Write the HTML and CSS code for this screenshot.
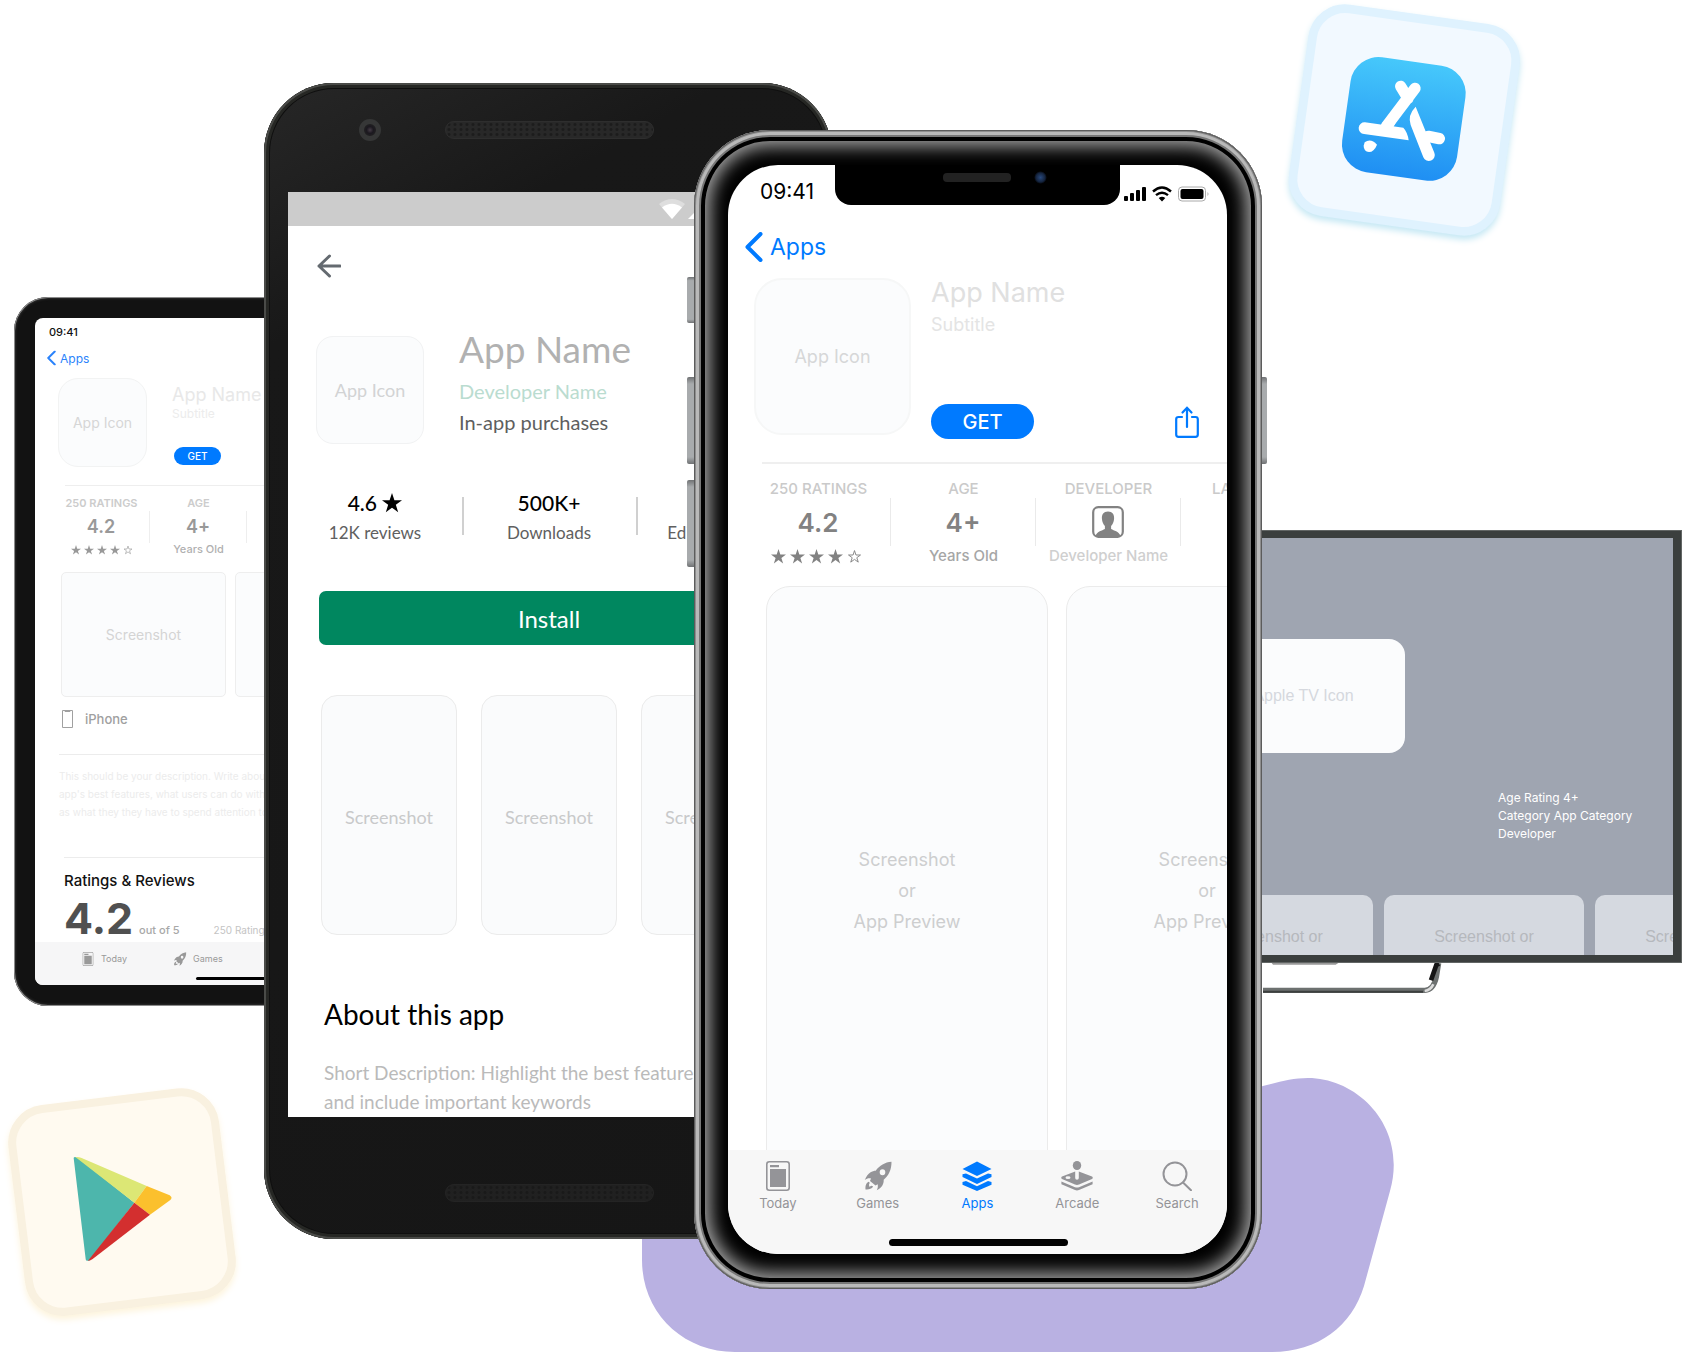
FILE: index.html
```html
<!DOCTYPE html>
<html lang="en">
<head>
<meta charset="utf-8">
<meta name="viewport" content="width=device-width, initial-scale=1">
<title>App store page previews</title>
<link rel="stylesheet" href="styles.css">
</head>
<body>
<svg class="sprite" width="0" height="0" aria-hidden="true">
  <symbol id="star" viewBox="0 0 24 24"><path d="M12 0l2.900 8.800H24l-7.400 5.400 2.800 8.800-7.400-5.400L4.600 23l2.800-8.800L0 8.800h9.100z"/></symbol>
  <symbol id="star-line" viewBox="0 0 24 24"><path fill="none" stroke="currentColor" stroke-width="1.500" d="M12 2.500l2.300 7.100h7.300l-5.900 4.300 2.300 7.100-6-4.400-6 4.400 2.300-7.100-5.900-4.300h7.300z"/></symbol>
  <symbol id="chevron" viewBox="0 0 18 30"><path fill="none" stroke="currentColor" stroke-width="4" stroke-linecap="round" stroke-linejoin="round" d="M15.500 2L2.500 15l13 13"/></symbol>
  <symbol id="today" viewBox="0 0 24 30"><rect x=".8" y=".8" width="22.400" height="28.400" rx="2.500" fill="none" stroke="currentColor" stroke-width="1.600"/><path d="M4 4h9v2.200H4zM4 8h16v18H4z"/></symbol>
  <symbol id="rocket" viewBox="0 0 28 30"><path fill-rule="evenodd" d="M27.500.8C21 1.300 15.500 4.500 11.700 9.800 8.500 9.800 4 11.500.8 19c2-1.600 4-2 6.200-1.500L6 20l5.500 4.500 2.200-1.200c.3 2 .3 3.700-.9 6 5-2.300 7.200-6.300 6.900-10.500C24.800 14.500 27.600 8.500 27.500.8zM18.500 8.200a2.800 3 0 1 1 0 6 2.800 3 0 0 1 0-6z"/><path d="M4.500 20.700C1.500 22.500 1.300 25.500 1.500 28.500c3 .3 6-.3 7.700-2.900l-1.600-.9-2.300 1-.3-2.200.8-1.800z"/></symbol>
  <symbol id="layers" viewBox="0 0 30 30"><path d="M15 .5L29.500 8 15 15 .5 8zM.5 13.300l3.500-.9 11 5.200 11-5.200 3.500.9V16L15 23 .5 16zM.5 21l3.500-.9 11 5.200 11-5.200 3.500.9v2.700L15 30 .5 23.700z"/></symbol>
  <symbol id="arcade" viewBox="0 0 32 30"><ellipse cx="16" cy="4.500" rx="4.200" ry="4.500"/><path fill-rule="evenodd" d="M14.200 10.500L1 15.500c-1 .6-1 2 0 2.500l13 5.500c1.300.5 2.700.5 4 0L31 18c1-.5 1-1.900 0-2.500l-13.200-5V17a1.800 1.800 0 0 1-3.600 0zM7 15.300a2.500 1.400 0 1 1 0 2.800 2.500 1.400 0 0 1 0-2.800z"/><path d="M.4 20.500L14 26.200c1.300.5 2.700.5 4 0l13.600-5.700v2.800L18 29c-1.300.5-2.700.5-4 0L.4 23.300z"/></symbol>
  <symbol id="search" viewBox="0 0 30 30"><g fill="none" stroke="currentColor" stroke-width="2" stroke-linecap="round"><circle cx="13" cy="13" r="11.500"/><path d="M21 21.500l8 7.800"/></g></symbol>
</svg>

<main class="scene">
  <svg class="blob" viewBox="642 1078 754 274" aria-hidden="true"><path d="M642 1180V1260C642 1313 683 1352 735 1352H1272C1318 1352 1352 1326 1364 1286L1390 1191C1408 1127 1358 1078 1308 1078C1290 1078 1276 1083 1255 1088Z" fill="#b9b1e2"/></svg>

  <section class="ipad" aria-label="Tablet store page">
    <div class="ipad-screen">
      <div class="ipad-time">09:41</div>
      <a class="ipad-back" href="#"><svg viewBox="0 0 18 30"><use href="#chevron"/></svg>Apps</a>
      <div class="ipad-head">
        <div class="ipad-icon">App Icon</div>
        <div class="ipad-info">
          <h2>App Name</h2>
          <p>Subtitle</p>
          <button type="button">GET</button>
        </div>
      </div>
      <div class="ipad-stats">
        <div class="stat"><span class="label">250 RATINGS</span><b>4.2</b><span class="stars"><svg><use href="#star"/></svg><svg><use href="#star"/></svg><svg><use href="#star"/></svg><svg><use href="#star"/></svg><svg><use href="#star-line"/></svg></span></div>
        <div class="stat"><span class="label">AGE</span><b>4+</b><span class="sub">Years Old</span></div>
      </div>
      <div class="ipad-shots"><div>Screenshot</div><div>Screenshot</div></div>
      <div class="ipad-device"><svg viewBox="0 0 11 18"><path d="M.5 .5h10v17H.5zM3 .5v1h5v-1" fill="none" stroke="currentColor"/></svg>iPhone</div>
      <p class="ipad-text">This should be your description. Write about your<br>app's best features, what users can do with it, as well<br>as what they they have to spend attention to</p>
      <h3>Ratings &amp; Reviews</h3>
      <div class="ipad-score"><b>4.2</b><span>out of 5</span><small>250 Ratings</small></div>
      <nav class="ipad-tabs">
        <a href="#"><svg viewBox="0 0 24 30"><use href="#today"/></svg>Today</a>
        <a href="#"><svg viewBox="0 0 28 30"><use href="#rocket"/></svg>Games</a>
        <a href="#" class="on"><svg viewBox="0 0 30 30"><use href="#layers"/></svg>Apps</a>
      </nav>
    </div>
  </section>

  <section class="tv" aria-label="TV store page">
    <svg class="stand" viewBox="0 0 540 96" aria-hidden="true"><path d="M26 0h200l-8 5H30z" fill="#999"/><path d="M0 82H486Q512 80 520 42L527 0" fill="none" stroke="#6d7170" stroke-width="16"/><path d="M0 86H480" stroke="#3c3f3e" stroke-width="6"/><path d="M504 52l16-46 8-4" fill="none" stroke="#151515" stroke-width="14"/><path d="M485 84q18-2 26-20" fill="none" stroke="#ddd" stroke-width="8"/></svg>
    <div class="tv-screen">
      <div class="tv-icon">Apple TV Icon</div>
      <ul class="tv-facts"><li>Age Rating 4+</li><li>Category App Category</li><li>Developer</li></ul>
      <div class="tv-shots"><div>Screenshot or</div><div>Screenshot or</div><div>Screenshot or</div><div>Screenshot or</div></div>
    </div>
  </section>

  <section class="android" aria-label="Android store page">
    <i class="camera"></i><i class="grille"></i>
    <div class="android-screen">
      <div class="android-status"><svg viewBox="0 0 60 20"><path d="M0 5Q13-5 26 5L13 20z" fill="#dedede"/><path d="M3 8.500Q13 1 23 8.500L13 20z" fill="#fff"/><path d="M29 20L49 0v20z" fill="#fff"/></svg></div>
      <a class="android-back" href="#" aria-label="Back"><svg viewBox="0 0 24 24"><path d="M12.500 2L2 12l10.500 10M2 12h21" fill="none" stroke="currentColor" stroke-width="3" stroke-linecap="round" stroke-linejoin="round"/></svg></a>
      <div class="android-head">
        <div class="android-icon">App Icon</div>
        <div><h2>App Name</h2><p class="dev">Developer Name</p><p>In-app purchases</p></div>
      </div>
      <div class="android-stats">
        <div><b>4.6 <svg viewBox="0 0 24 24"><use href="#star"/></svg></b><span>12K reviews</span></div>
        <div><b>500K+</b><span>Downloads</span></div>
        <div><b>&nbsp;</b><span>Editors’ Choice</span></div>
      </div>
      <button class="install" type="button">Install</button>
      <div class="android-shots"><div>Screenshot</div><div>Screenshot</div><div>Screenshot</div></div>
      <h3>About this app</h3>
      <p class="android-text">Short Description: Highlight the best features<br>and include important keywords</p>
    </div>
    <i class="grille low"></i>
  </section>

  <section class="iphone" aria-label="Phone store page">
    <i class="key k1"></i><i class="key k2"></i><i class="key k3"></i><i class="key k4"></i>
    <div class="iphone-screen">
      <div class="notch"><i></i><b></b></div>
      <div class="iphone-status"><time>09:41</time>
        <svg viewBox="0 0 86 16"><g><rect x="0" y="10" width="4" height="5" rx="1"/><rect x="6" y="7" width="4" height="8" rx="1"/><rect x="12" y="4" width="4" height="11" rx="1"/><rect x="18" y="1" width="4" height="14" rx="1"/></g><g fill="none" stroke="#000" stroke-width="2.400"><path d="M29 5.500q9-8 18 0M32 9.200q6-5 12 0"/></g><path d="M38 15.500l-3.300-3.600q3.300-2.400 6.600 0z"/><rect x="54.500" y="1" width="27" height="14" rx="3.500" fill="none" stroke="#aaa"/><rect x="56.500" y="3" width="23" height="10" rx="2"/><path d="M83.500 6v4q2-2 0-4z" fill="#aaa"/></svg>
      </div>
      <a class="iphone-back" href="#"><svg viewBox="0 0 18 30"><use href="#chevron"/></svg>Apps</a>
      <div class="iphone-head">
        <div class="iphone-icon">App Icon</div>
        <div class="iphone-info">
          <h1>App Name</h1>
          <p>Subtitle</p>
          <div class="actions">
            <button type="button" class="get">GET</button>
            <button type="button" class="share" aria-label="Share"><svg viewBox="0 0 24 32"><path d="M7 11H3.500Q1.200 11 1.200 13.300V28.500Q1.200 30.800 3.500 30.800H20.500Q22.800 30.800 22.800 28.500V13.300Q22.800 11 20.500 11H17M12 21V2M7.500 6.500L12 1.800l4.500 4.700" fill="none" stroke="currentColor" stroke-width="2.200" stroke-linecap="round"/></svg></button>
          </div>
        </div>
      </div>
      <hr>
      <div class="iphone-stats">
        <div class="stat"><span class="label">250 RATINGS</span><b>4.2</b><span class="stars"><svg><use href="#star"/></svg><svg><use href="#star"/></svg><svg><use href="#star"/></svg><svg><use href="#star"/></svg><svg><use href="#star-line"/></svg></span></div>
        <div class="stat"><span class="label">AGE</span><b>4+</b><span class="sub">Years Old</span></div>
        <div class="stat"><span class="label">DEVELOPER</span><b><svg viewBox="0 0 32 32"><rect x="1.200" y="1.200" width="29.600" height="29.600" rx="5" fill="none" stroke="currentColor" stroke-width="2.200"/><path d="M16 5.500c4.500 0 6.300 3 6.100 7-.2 4-1.600 5.800-3 7.500v3c3 1.600 7.500 2.500 9.400 6.500L26 31H6l-2.500-1.500c1.900-4 6.400-4.900 9.400-6.500v-3c-1.400-1.700-2.800-3.500-3-7.500-.2-4 1.600-7 6.100-7z"/></svg></b><span class="sub pale">Developer Name</span></div>
        <div class="stat"><span class="label">LANGUAGE</span></div>
      </div>
      <div class="iphone-shots"><div>Screenshot<br>or<br>App Preview</div><div>Screenshot<br>or<br>App Preview</div></div>
      <nav class="iphone-tabs">
        <a href="#"><svg viewBox="0 0 24 30"><use href="#today"/></svg>Today</a>
        <a href="#"><svg viewBox="0 0 28 30"><use href="#rocket"/></svg>Games</a>
        <a href="#" class="on"><svg viewBox="0 0 30 30"><use href="#layers"/></svg>Apps</a>
        <a href="#"><svg viewBox="0 0 32 30"><use href="#arcade"/></svg>Arcade</a>
        <a href="#"><svg viewBox="0 0 30 30"><use href="#search"/></svg>Search</a>
      </nav>
    </div>
  </section>

  <svg class="tile appstore" viewBox="0 0 900 780" role="img" aria-label="App Store">
    <defs><linearGradient id="sky" x1="0" y1="0" x2="0" y2="1"><stop offset="0" stop-color="#46c8fb"/><stop offset="1" stop-color="#1f8ff3"/></linearGradient></defs>
    <g transform="rotate(8 463 360)">
      <rect x="156" y="53" width="614" height="614" rx="98" fill="#f2f9ff" stroke="#dff2fe" stroke-width="26"/>
      <rect x="287" y="183" width="348" height="348" rx="84" fill="url(#sky)"/>
    </g>
    <g fill="none" stroke="#fff" stroke-width="34" stroke-linecap="round"><path d="M452 259l22 36M495 265l-86 114M535 409l33 7"/></g>
    <g fill="#fff"><path d="M345 367L460 383Q473 397 476 421L342 402A17 17 0 0 1 345 367Z"/><path d="M397 368l50-20-20 40z"/><path d="M497 320L553 458A17 17 0 0 1 520 472L482 375Q472 345 497 320Z"/><path d="M344 427Q362 413 381 434Q372 456 357 456Q341 454 341 437Z"/></g>
  </svg>

  <svg class="tile play" viewBox="0 0 900 846" role="img" aria-label="Google Play">
    <rect x="60" y="90" width="612" height="612" rx="102" fill="#fffaf0" stroke="#f9f1e0" stroke-width="24" transform="rotate(-7 366 396)"/>
    <path d="M221 264Q221 261 226 261L236 265L403 398L268 572H260Q257 571 257 567Z" fill="#4db6ac"/>
    <path d="M226 261Q236 260 245 264L440 348L403 398Z" fill="#dce775"/>
    <path d="M440 348L509 376Q519 383 511 390L450 434L403 398Z" fill="#fbc02d"/>
    <path d="M403 398L450 434L278 567Q270 573 264 572Z" fill="#d32f2f"/>
  </svg>
</main>
</body>
</html>
```
FILE: styles.css
```css
* { box-sizing: border-box; }
body, h1, h2, h3, p, ul { margin: 0; padding: 0; font-weight: 400; }
body { background: #fff; font-family: Inter, sans-serif; }
a { color: inherit; text-decoration: none; }
button { border: 0; padding: 0; font-family: inherit; }
svg { fill: currentColor; flex: none; }
ul { list-style: none; }
.sprite { position: absolute; }

/* Collage canvas: devices are placed around the window's centre line */
.scene { position: relative; overflow: hidden; padding: 130px 0 63px; }
.blob { position: absolute; left: calc(50% - 199px); top: 1078px; width: 754px; height: 274px; }
.tile { position: absolute; width: 300px; }
.appstore { left: calc(50% + 409px); top: 0; filter: drop-shadow(0 4px 3px #c6e8f4); }
.play { left: calc(50% - 841px); top: 1070px; filter: drop-shadow(0 4px 3px #fdf4dd); }

/* Tablet */
.ipad { position: absolute; left: calc(50% - 827px); top: 297px; width: 474px; height: 709px; padding: 21px; border-radius: 34px; background: #121212; box-shadow: inset 0 0 0 1px #8b8b8b, inset 0 0 3px 1px #444; }
.ipad-screen { display: flex; flex-direction: column; height: 100%; overflow: hidden; border-radius: 8px; background: #fff; white-space: nowrap; }
.ipad-time { padding: 4px 14px 0; font-size: 11px; line-height: 20px; font-weight: 500; color: #111; }
.ipad-back { display: flex; align-items: center; gap: 4px; padding-left: 12px; height: 32px; font-size: 12px; color: #2b83fb; }
.ipad-back svg { width: 9px; height: 16px; }
.ipad-head { display: flex; gap: 25px; padding: 4px 0 0 23px; }
.ipad-icon { display: grid; place-items: center; width: 89px; height: 89px; border: 1px solid #f2f3f3; border-radius: 20px; background: #fbfcfd; font-size: 14px; color: #d6d6d6; }
.ipad-info { padding-top: 6px; }
.ipad-info h2 { font-size: 18px; line-height: 22px; color: #e8e8e8; }
.ipad-info p { font-size: 12px; line-height: 16px; color: #ececec; }
.ipad-info button { display: block; width: 47px; height: 18px; margin: 25px 0 0 2px; border-radius: 9px; background: #007aff; color: #fff; font-size: 10px; font-weight: 500; }
.stat { display: flex; flex-direction: column; text-align: center; }
.stars { display: flex; justify-content: center; align-items: center; }
.ipad-stats { display: grid; grid-template-columns: repeat(3, 97px); margin: 18px 0 0 30px; border-top: 1px solid #eee; padding-top: 9px; color: #999; }
.ipad-stats .stat { margin-left: -12px; margin-right: 12px; }
.ipad-stats .label { font-size: 11px; line-height: 16px; font-weight: 600; color: #ccc; }
.ipad-stats b { border-right: 1px solid #eee; font-size: 18px; line-height: 32px; font-weight: 600; }
.ipad-stats .sub { font-size: 11px; line-height: 12px; font-weight: 500; color: #b0b0b0; }
.ipad-stats .stars { height: 14px; gap: 3px; }
.ipad-stats .stars svg { width: 10px; height: 10px; }
.ipad-shots { display: flex; gap: 9px; margin: 15px 0 0 26px; }
.ipad-shots div { flex: none; width: 165px; height: 125px; border: 1px solid #eee; border-radius: 5px; background: #fbfcfd; text-align: center; font-size: 14px; line-height: 123px; color: #d4d4d4; }
.ipad-device { display: flex; align-items: center; gap: 12px; margin: 12px 0 0 27px; height: 20px; font-size: 13px; font-weight: 500; color: #a0a0a0; }
.ipad-device svg { width: 11px; height: 18px; }
.ipad-text { margin: 25px 0 0 24px; border-top: 1px solid #ececec; padding-top: 12px; font-size: 10px; line-height: 18px; color: #ececec; }
.ipad-screen h3 { margin: 36px 0 0 29px; border-top: 1px solid #ececec; padding-top: 12px; font-size: 15px; line-height: 22px; font-weight: 500; color: #111; }
.ipad-score { display: flex; align-items: baseline; padding-left: 29px; height: 50px; color: #a8a8a8; }
.ipad-score b { font-size: 43px; line-height: 52px; color: #505050; }
.ipad-score span { margin-left: 6px; font-size: 11px; font-weight: 500; }
.ipad-score small { margin-left: 34px; font-size: 10px; color: #c4c4c4; }
.ipad-tabs { flex: 1; position: relative; display: flex; gap: 46px; padding: 10px 0 0 46px; background: #f6f6f7; color: #999; font-size: 9px; line-height: 14px; }
.ipad-tabs::after { content: ""; position: absolute; left: 161px; bottom: 5px; width: 110px; height: 3px; border-radius: 2px; background: #000; }
.ipad-tabs a { display: flex; gap: 6px; }
.ipad-tabs svg { width: 14px; height: 14px; }
.on { color: #007aff; }

/* TV */
.tv { position: absolute; left: calc(50% + 84px); top: 530px; width: 757px; height: 433px; padding: 8px 9px; background: #3b3f3e; box-shadow: inset 0 0 0 1px #626665; font-family: "Liberation Sans", sans-serif; }
.stand { position: absolute; left: 338px; top: 433px; width: 180px; height: 32px; }
.tv-screen { height: 100%; overflow: hidden; padding-top: 101px; background: #9fa5b1; }
.tv-icon { width: 202px; height: 114px; margin: 0 auto; border-radius: 16px; background: #fbfcfd; text-align: center; font-size: 16px; line-height: 114px; color: #d5d8de; }
.tv-facts { margin: 36px 0 52px 564px; font-family: Inter, sans-serif; font-size: 12px; line-height: 18px; color: #fff; }
.tv-shots { display: flex; gap: 11px; padding-left: 28px; }
.tv-shots div { flex: none; width: 200px; height: 100px; border-radius: 10px; background: #d5d9e0; text-align: center; font-size: 16px; line-height: 84px; color: #b5b8bd; }

/* Android phone */
.android { position: absolute; left: calc(50% - 577px); top: 83px; width: 568px; height: 1156px; padding: 109px 22px 122px 24px; border-radius: 70px; background: linear-gradient(150deg, #272727, #181818 18%, #161616); box-shadow: inset 0 0 0 2px #4a4b48, inset 0 0 0 5px #262724, inset 0 0 0 6px #0f0f0f; font-family: Lato, sans-serif; }
.camera { position: absolute; left: 95px; top: 36px; width: 22px; height: 22px; border: 5px solid #363737; border-radius: 50%; background: radial-gradient(#453c46, #1b181f 40%, #222 80%); }
.grille { position: absolute; left: 181px; top: 38px; width: 209px; height: 18px; border: 1px solid #2e2e2e; border-radius: 9px; background: radial-gradient(circle, #1c1c1c 1px, transparent 2px) 0 0 / 6px 5px, #282828; }
.grille.low { top: 1101px; opacity: 0.6; }
.android-screen { height: 100%; overflow: hidden; background: #fff; white-space: nowrap; }
.android-status { height: 34px; padding: 7px 0 0 371px; background: #ccc; }
.android-status svg { width: 60px; height: 20px; display: block; }
.android-back { display: block; padding: 28px 0 0 29px; color: #646a70; }
.android-back svg { display: block; width: 24px; height: 24px; }
.android-head { display: flex; gap: 35px; padding: 58px 0 0 28px; }
.android-icon { display: grid; place-items: center; width: 108px; height: 108px; border: 1px solid #f1f2f3; border-radius: 17px; background: #fbfcfd; font-size: 18px; color: #d2d3d4; }
.android-head h2 { margin-top: -8px; font-size: 37px; line-height: 42px; color: #b1b1b1; }
.android-head p { font-size: 20px; line-height: 31px; color: #5e5e5e; }
.android-head .dev { margin-top: 6px; color: #badcd0; }
.android-stats { display: grid; grid-template-columns: repeat(3, 1fr); margin-top: 45px; text-align: center; }
.android-stats div { position: relative; height: 64px; }
.android-stats div + div::before { content: ""; position: absolute; left: 0; top: 8px; width: 2px; height: 38px; background: #d0d0d0; }
.android-stats b { display: block; font-size: 21px; line-height: 28px; font-weight: 500; color: #000; }
.android-stats b svg { width: 20px; height: 20px; vertical-align: -2px; }
.android-stats span { display: block; font-size: 17px; line-height: 32px; color: #606060; }
.install { display: block; width: 460px; height: 54px; margin: 38px auto 50px 31px; border-radius: 7px; background: #00875f; color: #fff; font-size: 24px; }
.android-shots { display: flex; gap: 24px; padding-left: 33px; }
.android-shots div { flex: none; width: 136px; height: 240px; border: 1px solid #ebebeb; border-radius: 16px; background: #fafbfc; text-align: center; font-size: 18px; line-height: 242px; color: #c8c9ca; }
.android-screen h3 { margin: 61px 0 0 36px; font-size: 28px; line-height: 36px; color: #000; }
.android-text { margin: 26px 0 0 36px; font-size: 19px; line-height: 29px; color: #bababa; }

/* Front phone, sets the height of the scene */
.iphone { position: relative; width: 568px; height: 1159px; margin-left: calc(50% - 147px); padding: 35px 35px 35px 34px; border-radius: 76px; background: #000; box-shadow: inset 0 0 0 1px #5c5c5c, inset 0 0 0 2px #8e8e8e, inset 0 0 0 5px #b9b9b9, inset 0 0 0 7px #777, inset 0 0 0 11px #000, inset 0 0 18px 16px #aaa; }
.key { position: absolute; left: -7px; width: 7px; height: 87px; border-radius: 2px 0 0 2px; background: linear-gradient(#707274, #a8abad 8%, #a8abad 92%, #707274); }
.k1 { top: 147px; height: 46px; }
.k2 { top: 247px; }
.k3 { top: 350px; }
.k4 { top: 247px; left: 568px; width: 5px; border-radius: 0 2px 2px 0; }
.iphone-screen { position: relative; display: flex; flex-direction: column; height: 100%; overflow: hidden; border-radius: 50px; background: #fff; white-space: nowrap; }
.notch { position: absolute; left: 107px; top: -1px; width: 285px; height: 41px; border-radius: 0 0 16px 16px; background: #000; }
.notch i { position: absolute; left: 108px; top: 9px; width: 68px; height: 9px; border-radius: 4px; background: #222; }
.notch b { position: absolute; left: 199px; top: 7px; width: 13px; height: 13px; border-radius: 50%; background: radial-gradient(#28487c, #14233d 50%, #000 70%); }
.iphone-status { display: flex; justify-content: space-between; align-items: center; height: 52px; padding: 0 17px 0 32px; font-size: 21px; color: #000; }
.iphone-status svg { width: 86px; height: 16px; margin-top: 6px; }
.iphone-back { display: flex; align-items: center; gap: 7px; height: 60px; padding-left: 17px; font-size: 23px; color: #007aff; }
.iphone-back svg { width: 18px; height: 30px; }
.iphone-head { display: flex; gap: 20px; padding: 1px 28px 0 26px; }
.iphone-icon { display: grid; place-items: center; width: 157px; height: 157px; border: 2px solid #f6f7f7; border-radius: 28px; background: #fbfcfd; font-size: 18px; color: #d6d7d8; }
.iphone-info { flex: 1; height: 161px; display: flex; flex-direction: column; }
.iphone-info h1 { font-size: 27px; line-height: 30px; color: #e0e0e0; }
.iphone-info p { font-size: 18px; line-height: 34px; color: #e4e4e4; }
.actions { display: flex; justify-content: space-between; align-items: center; margin-top: auto; }
.get { width: 103px; height: 35px; border-radius: 18px; background: #007aff; color: #fff; font-size: 20px; font-weight: 500; }
.share { height: 32px; background: none; color: #007aff; }
.share svg { display: block; width: 24px; height: 32px; }
.iphone hr { width: auto; height: 2px; margin: 23px 0 0 34px; border: 0; background: #efefef; }
.iphone-stats { display: grid; grid-template-columns: repeat(4, 145px); padding: 16px 0 0 18px; color: #828282; }
.iphone-stats .label { font-size: 15px; line-height: 18px; font-weight: 500; color: #cacaca; }
.iphone-stats b { display: flex; align-items: center; justify-content: center; height: 48px; border-right: 1px solid #eaeaea; font-size: 26px; font-weight: 600; }
.iphone-stats b svg { width: 32px; height: 32px; }
.iphone-stats .sub { font-size: 15px; line-height: 20px; font-weight: 500; color: #a6a6a6; }
.iphone-stats .pale { color: #cfcfcf; }
.iphone-stats .stars { height: 20px; gap: 4px; padding-right: 5px; }
.iphone-stats .stars svg { width: 15px; height: 15px; }
.iphone-shots { flex: 1; min-height: 0; display: flex; gap: 18px; padding-left: 38px; margin-top: 20px; overflow: hidden; }
.iphone-shots div { flex: none; display: grid; align-content: center; width: 282px; height: 608px; border: 1px solid #ebebeb; border-radius: 24px; background: #fbfcfd; text-align: center; font-size: 18px; line-height: 31px; color: #cdcecf; }
.iphone-tabs { position: relative; display: grid; grid-template-columns: repeat(5, 1fr); height: 104px; padding-top: 11px; background: #f7f7f7; font-size: 13px; line-height: 18px; color: #949498; }
.iphone-tabs::after { content: ""; position: absolute; left: calc(50% - 89px); bottom: 8px; width: 179px; height: 7px; border-radius: 4px; background: #000; }
.iphone-tabs a { display: flex; flex-direction: column; align-items: center; gap: 3px; }
.iphone-tabs .on { color: #007aff; }
.iphone-tabs svg { width: 32px; height: 30px; }
```
